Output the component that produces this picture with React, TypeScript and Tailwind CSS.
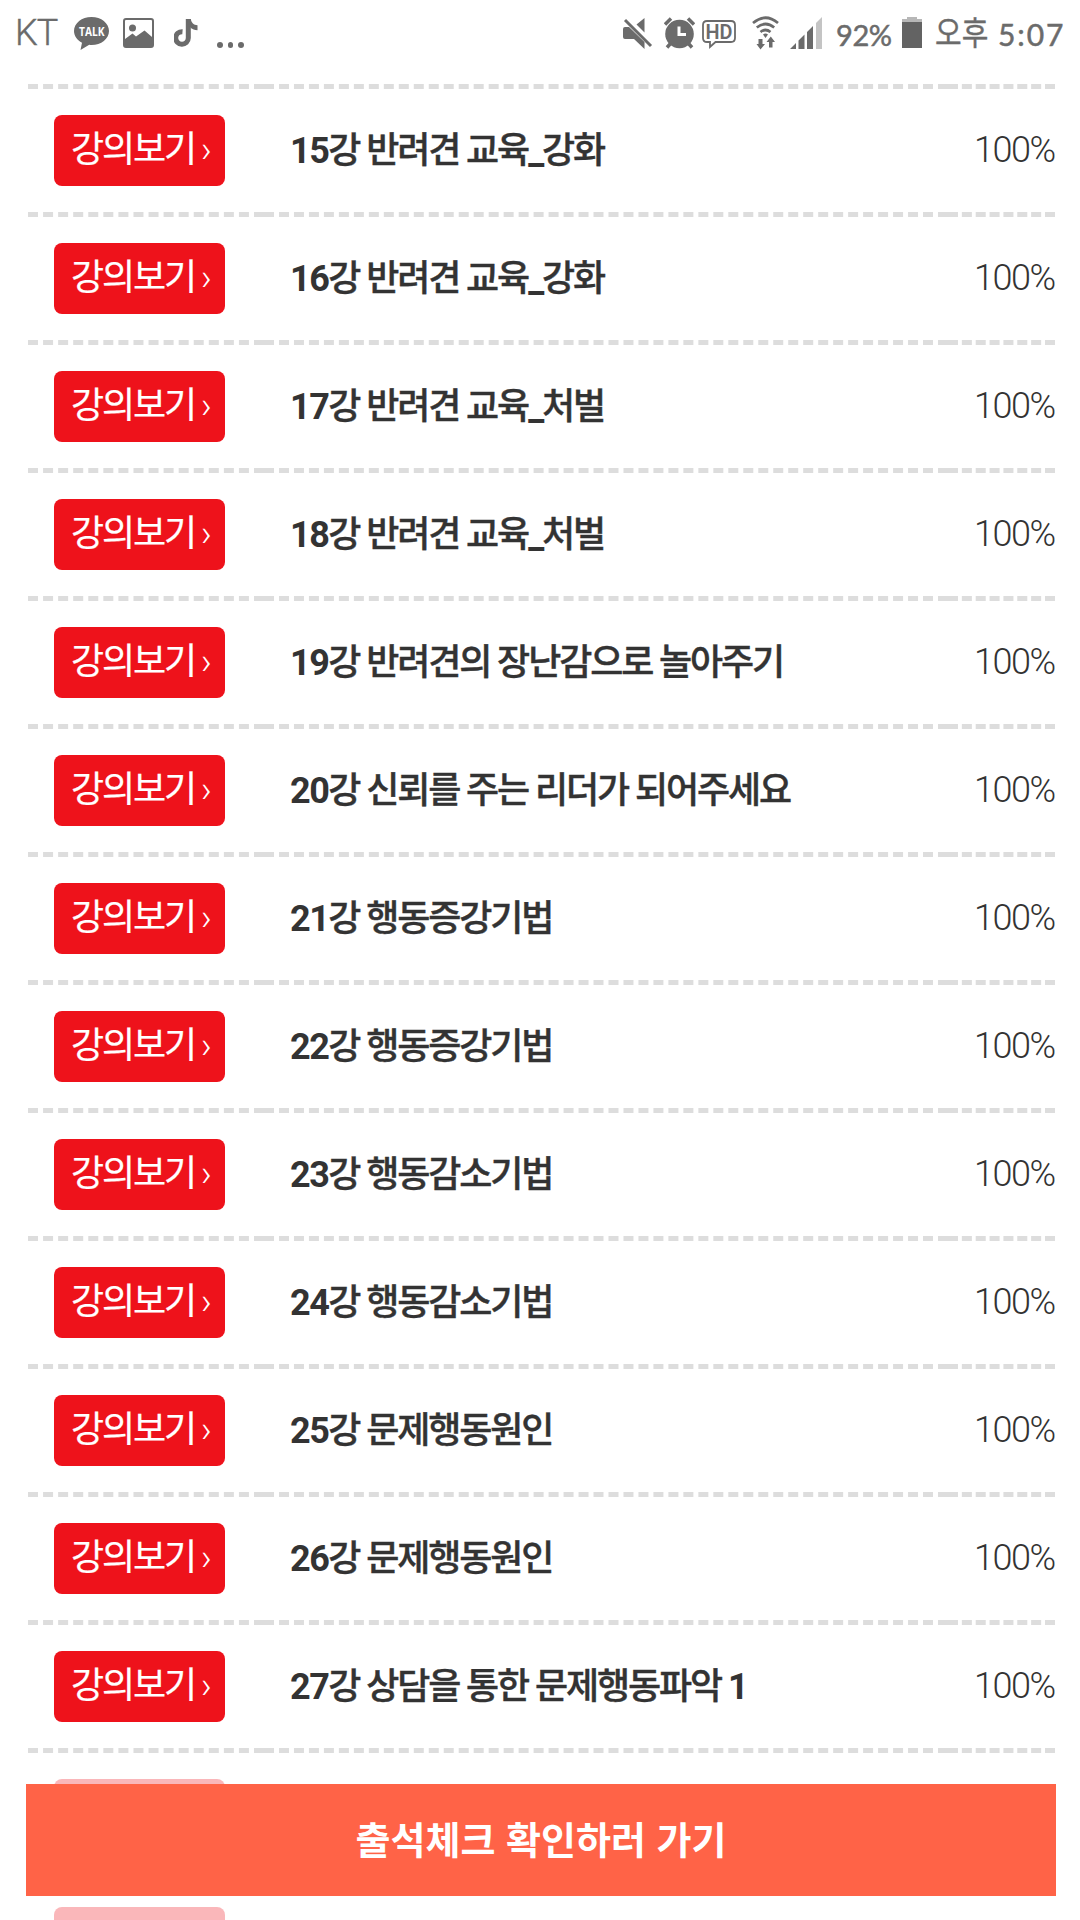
import React from "react";

const lectures: [number, string][] = [
  [15, "강 반려견 교육_강화"],
  [16, "강 반려견 교육_강화"],
  [17, "강 반려견 교육_처벌"],
  [18, "강 반려견 교육_처벌"],
  [19, "강 반려견의 장난감으로 놀아주기"],
  [20, "강 신뢰를 주는 리더가 되어주세요"],
  [21, "강 행동증강기법"],
  [22, "강 행동증강기법"],
  [23, "강 행동감소기법"],
  [24, "강 행동감소기법"],
  [25, "강 문제행동원인"],
  [26, "강 문제행동원인"],
  [27, "강 상담을 통한 문제행동파악 1"],
];

function TalkIcon() {
  return (
    <svg className="ml-[16px] w-[35px] h-[33px]" viewBox="0 0 35 33">
      <path d="M17.5 0C7.800 0 0 6.200 0 14c0 5 3.200 9.300 8 11.700L6.500 33l8.700-5.200c.8.100 1.500.200 2.300.200C27.200 28 35 21.800 35 14S27.200 0 17.500 0Z" fill="#6b6b6b" />
      <text x="5" y="18.500" textLength="25.500" lengthAdjust="spacingAndGlyphs" fill="#fff" fontFamily="Open Sans" fontWeight="700" fontSize="12">TALK</text>
    </svg>
  );
}

function PictureIcon() {
  return (
    <svg className="ml-[14px] w-[31px] h-[30px]" viewBox="0 0 31 30" fill="#6b6b6b">
      <rect x="1" y="1" width="29" height="28" rx="2" fill="none" stroke="#6b6b6b" strokeWidth="2" />
      <circle cx="9.500" cy="10" r="3.500" />
      <path d="M2 21l7.500-5.500 3.500 3 8.500-6L29 19v9H2Z" />
    </svg>
  );
}

function NoteIcon() {
  return (
    <svg className="ml-[20px] w-[24px] h-[28px]" viewBox="0 0 24 28">
      <path d="M14.300 0v19a6.300 6.300 0 1 1-5.800-6.300" fill="none" stroke="#6b6b6b" strokeWidth="5" />
      <path d="M12 0h4.800c.5 3.800 3 6 6.700 6.200v5c-3 0-5-1-6.700-2.200Z" fill="#6b6b6b" />
    </svg>
  );
}

function MuteIcon() {
  return (
    <svg className="w-[30px] h-[33px]" viewBox="0 0 30 33" fill="#6b6b6b">
      <path d="M13.500 7.500L21.500 1v14.500ZM0 12q0-2 2-2h4L21.500 25v7L11 22H2q-2 0-2-2Z" />
      <path d="M2 3L28 29" stroke="#6b6b6b" strokeWidth="3" />
    </svg>
  );
}

function AlarmIcon() {
  return (
    <svg className="ml-[11px] w-[31px] h-[32px]" viewBox="0 0 31 32">
      <circle cx="15.500" cy="17" r="14.300" fill="#6b6b6b" />
      <path d="M1 7.500L7 1.500M24 1.500l6 6M7 26l-4 4.500M24 26l4 4.500" stroke="#6b6b6b" strokeWidth="3.500" />
      <path d="M15 9.500V17.500H22" fill="none" stroke="#fff" strokeWidth="3" />
    </svg>
  );
}

function HdIcon() {
  return (
    <svg className="ml-[7px] mt-[4px] w-[35px] h-[30px]" viewBox="0 0 35 30">
      <path d="M5 1h24q4 0 4 4v13q0 4-4 4H13.500L8 27v-5H5q-4 0-4-4V5q0-4 4-4Z" fill="none" stroke="#6b6b6b" strokeWidth="1.800" />
      <text x="3.500" y="18.500" textLength="27" lengthAdjust="spacingAndGlyphs" fill="#6b6b6b" fontFamily="Roboto" fontWeight="600" fontSize="19.500">HD</text>
    </svg>
  );
}

function WifiIcon() {
  return (
    <svg className="ml-[15px] w-[27px] h-[34px]" viewBox="0 0 27 34" fill="#6b6b6b">
      <path d="M1 7Q13.500-3.500 26 7M4.800 11.500Q13.500 4.500 22.200 11.500M8.500 16Q13.500 12 18.500 16" fill="none" stroke="#6b6b6b" strokeWidth="2.700" />
      <path d="M11 18.500q2.500-2 5 0l-2.500 3.500Z" />
      <path d="M6.500 23h4v5H13l-4.500 5.500L4.500 28h2ZM17 31.500V26h-2.500l4.300-5.500L23 26h-2.500v5.500Z" />
    </svg>
  );
}

function SignalIcon() {
  return (
    <svg className="ml-[11px] w-[32px] h-[32px]" viewBox="0 0 32 32" fill="#6b6b6b">
      <path d="M0 32L6 26v6ZM8.500 23.500L14.500 17.500V32h-6ZM17 15L23 9v23h-6Z" />
      <path d="M26 6L32 0v32h-6Z" fill="#c4c4c4" />
    </svg>
  );
}

function StatusBar() {
  return (
    <header className="flex h-[84px] shrink-0 items-start justify-between pl-[15px] pr-[17px] text-[#6b6b6b]">
      <div className="flex h-[66px] items-center">
        <span className="w-[43px] font-[Roboto] text-[36px] font-light leading-none tracking-[-1px] [-webkit-text-stroke:0.4px]">KT</span>
        <TalkIcon />
        <PictureIcon />
        <NoteIcon />
        <div className="ml-[19px] mt-[24px] flex gap-[5px]">
          <i className="size-[5.500px] rounded-full bg-[#6b6b6b]" />
          <i className="size-[5.500px] rounded-full bg-[#6b6b6b]" />
          <i className="size-[5.500px] rounded-full bg-[#6b6b6b]" />
        </div>
      </div>
      <div className="flex h-[66px] items-center">
        <MuteIcon />
        <AlarmIcon />
        <HdIcon />
        <WifiIcon />
        <SignalIcon />
        <span className="ml-[14px] mt-[2px] w-[58px] whitespace-nowrap font-[Lato] text-[29px] leading-none tracking-[-0.400px] [-webkit-text-stroke:0.5px]">92%</span>
        <svg className="ml-[8px] w-[20px] h-[32px]" viewBox="0 0 20 32">
          <path d="M5 0h10v2h5v3H0V2h5Z" fill="#b7b7b7" />
          <path d="M0 5h20v26H0Z" fill="#636363" />
        </svg>
        <span className="-mt-[6px] ml-[13px] w-[53px] origin-center scale-y-[1.15] whitespace-nowrap font-['Noto_Sans_CJK_KR'] text-[29px] leading-none [-webkit-text-stroke:0.3px]">오후</span>
        <span className="ml-[10px] mt-[2px] w-[65px] whitespace-nowrap font-[Lato] text-[30px] leading-none tracking-[1.900px] [-webkit-text-stroke:0.5px]">5:07</span>
      </div>
    </header>
  );
}

const cell = "h-[128px] border-t-[5px] border-dashed border-[#dddddd] p-0 align-middle";

function LectureButton({ faded = false }: { faded?: boolean }) {
  return (
    <button className={`ml-[26px] flex h-[71px] w-[171px] items-center rounded-[8px] bg-[#ee121b] pb-[1px] pl-[17px] tracking-[-2.100px] whitespace-nowrap text-white ${faded ? "opacity-30" : ""}`}>
      {!faded && (
        <>
          <span className="[-webkit-text-stroke:0.2px]">강의보기</span>
          <span className="ml-[6px] font-light">›</span>
        </>
      )}
    </button>
  );
}

function Title({ no, text }: { no: number; text: string }) {
  return (
    <div className="pl-[26px] font-medium tracking-[-2.100px]">
      <b className="font-bold tracking-[-1.500px]">{no}</b>
      {text.split(/([_1])/).map((part, i) =>
        i % 2 === 1 ? (
          <b key={i} className="font-bold">{part}</b>
        ) : (
          <span key={i} className="[-webkit-text-stroke:0.4px]">{part}</span>
        ),
      )}
    </div>
  );
}

export default function App() {
  return (
    <main className="relative flex h-[1920px] w-[1080px] flex-col overflow-hidden bg-white">
      <StatusBar />
      <table className="ml-[28px] w-[1027px] table-fixed border-separate border-spacing-0 font-[Roboto,'Noto_Sans_CJK_KR',sans-serif] text-[36px] leading-[50px] tracking-[-1.800px] text-[#333333]">
        <colgroup>
          <col className="w-[236px]" />
          <col className="w-[684px]" />
          <col className="w-[107px]" />
        </colgroup>
        <tbody>
          {lectures.map(([no, title]) => (
            <tr key={no}>
              <td className={cell}><LectureButton /></td>
              <td className={`${cell} whitespace-nowrap`}><Title no={no} text={title} /></td>
              <td className={`${cell} text-right font-light tracking-[-1.500px]`}>
                <div className="pb-[2px] pr-[0.500px]">100%</div>
              </td>
            </tr>
          ))}
          {[28, 29].map((no) => (
            <tr key={no}>
              <td className={cell}><LectureButton faded /></td>
              <td className={cell} />
              <td className={cell} />
            </tr>
          ))}
        </tbody>
      </table>
      <button className="absolute left-[26px] top-[1784px] flex h-[112px] w-[1030px] items-center justify-center bg-[#ff6347] pb-[5px] font-['Noto_Sans_CJK_KR'] text-[38px] font-bold [word-spacing:2px] text-white">
        출석체크 확인하러 가기
      </button>
    </main>
  );
}
